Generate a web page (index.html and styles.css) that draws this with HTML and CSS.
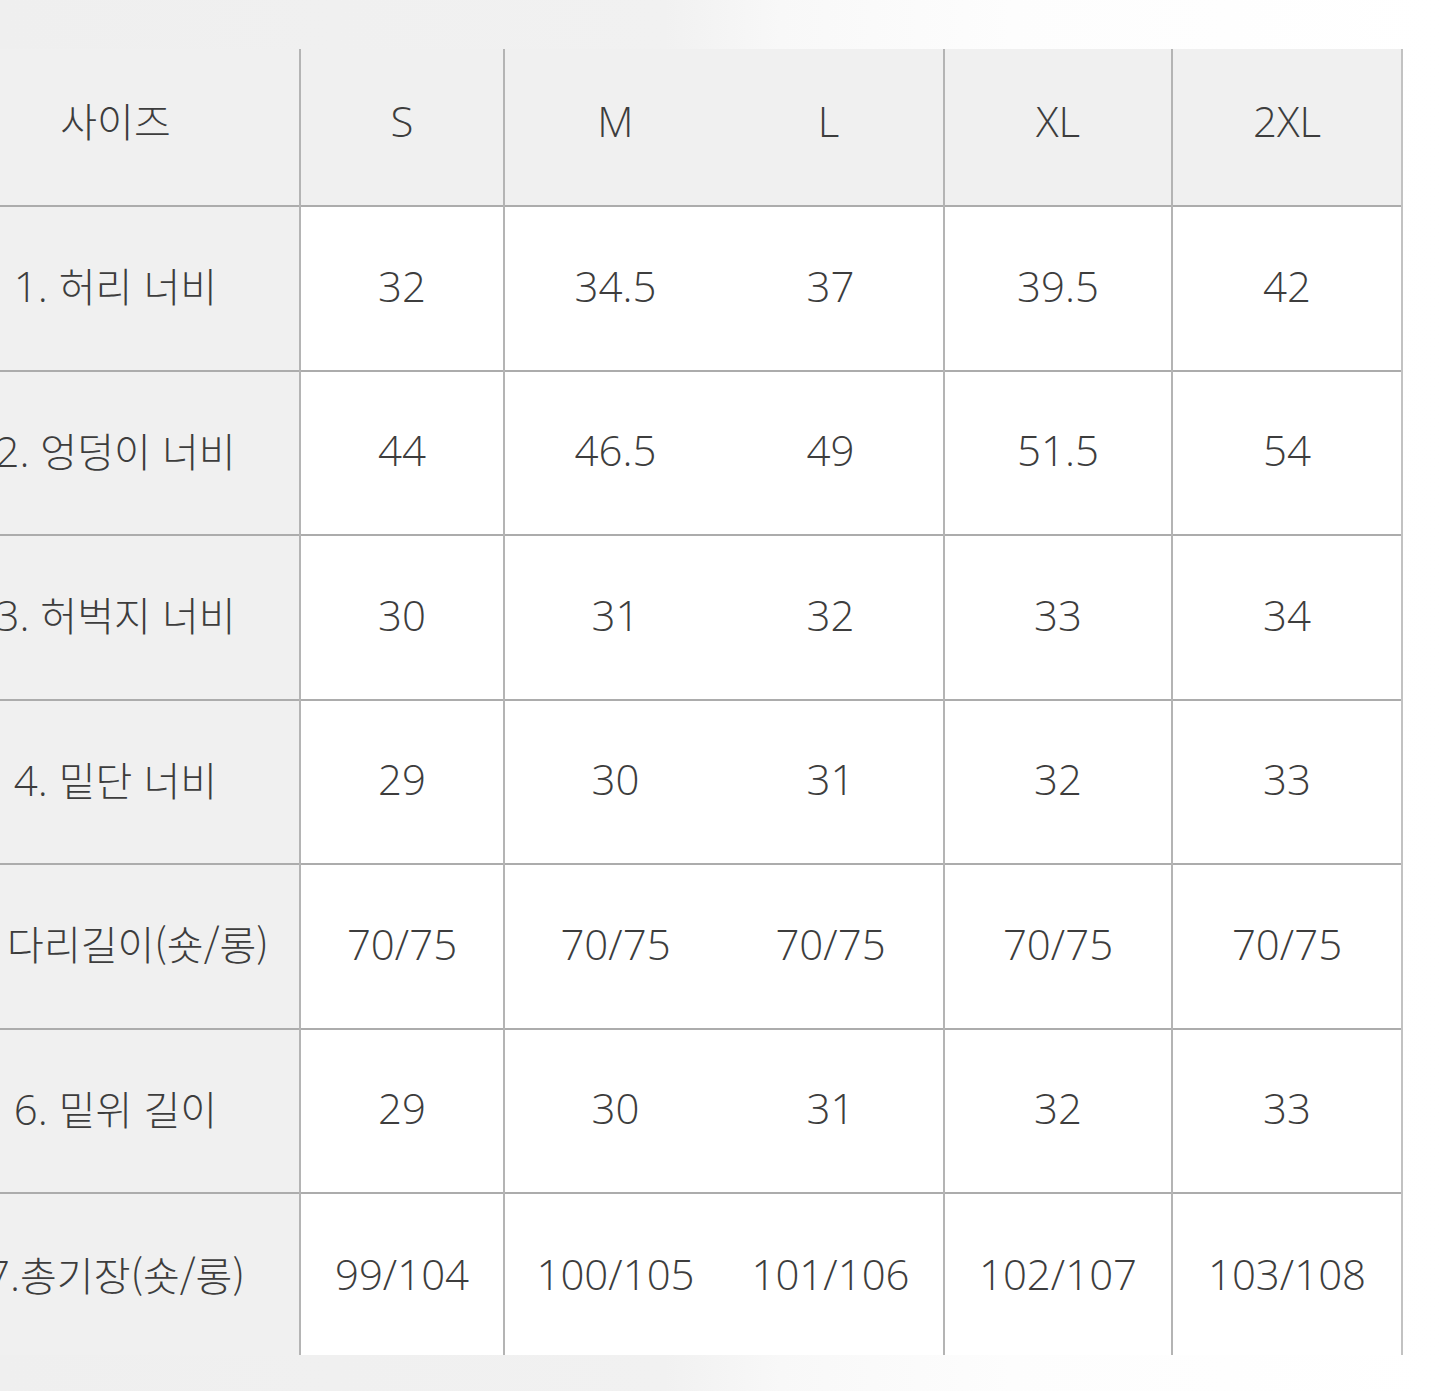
FILE: index.html
```html
<!DOCTYPE html>
<html lang="ko">
<head>
<meta charset="utf-8">
<title>사이즈</title>
<link rel="stylesheet" href="styles.css">
</head>
<body>
<div class="sheet">
  <table class="size-table">
    <colgroup>
      <col class="c-label">
      <col class="c-s">
      <col class="c-m">
      <col class="c-l">
      <col class="c-xl">
      <col class="c-2xl">
    </colgroup>
    <thead>
      <tr>
        <th class="label"><span class="ko">사이즈</span></th>
        <th>S</th>
        <th class="m">M</th>
        <th class="l">L</th>
        <th>XL</th>
        <th class="last">2XL</th>
      </tr>
    </thead>
    <tbody>
      <tr>
        <td class="label">1. <span class="ko">허리 너비</span></td>
        <td>32</td><td class="m">34.5</td><td class="l">37</td><td>39.5</td><td class="last">42</td>
      </tr>
      <tr>
        <td class="label">2. <span class="ko">엉덩이 너비</span></td>
        <td>44</td><td class="m">46.5</td><td class="l">49</td><td>51.5</td><td class="last">54</td>
      </tr>
      <tr>
        <td class="label">3. <span class="ko">허벅지 너비</span></td>
        <td>30</td><td class="m">31</td><td class="l">32</td><td>33</td><td class="last">34</td>
      </tr>
      <tr>
        <td class="label">4. <span class="ko">밑단 너비</span></td>
        <td>29</td><td class="m">30</td><td class="l">31</td><td>32</td><td class="last">33</td>
      </tr>
      <tr>
        <td class="label">5. <span class="ko">다리길이(숏/롱)</span></td>
        <td>70/75</td><td class="m">70/75</td><td class="l">70/75</td><td>70/75</td><td class="last">70/75</td>
      </tr>
      <tr>
        <td class="label">6. <span class="ko">밑위 길이</span></td>
        <td>29</td><td class="m">30</td><td class="l">31</td><td>32</td><td class="last">33</td>
      </tr>
      <tr class="final">
        <td class="label">7.<span class="ko">총기장(숏/롱)</span></td>
        <td>99/104</td><td class="m">100/105</td><td class="l">101/106</td><td>102/107</td><td class="last">103/108</td>
      </tr>
    </tbody>
  </table>
</div>
</body>
</html>
```

FILE: styles.css
```css
html, body {
  margin: 0;
  padding: 0;
}

body {
  width: 1445px;
  height: 1391px;
  overflow: hidden;
  background: linear-gradient(90deg, #efefef 0%, #f1f1f1 46%, #f8f8f8 54%, #fdfdfd 70%, #ffffff 100%);
  font-family: "Open Sans", "Noto Sans CJK KR", sans-serif;
  color: #3d3d3d;
}

.sheet {
  padding-top: 49px;
}

.size-table {
  margin-left: -68px;
  border-collapse: collapse;
  border-spacing: 0;
  table-layout: fixed;
  width: 1470px;
  font-size: 42px;
  font-weight: 300;
}

.c-label { width: 368px; }
.c-s { width: 204px; }
.c-m { width: 222px; }
.c-l { width: 218px; }
.c-xl { width: 228px; }
.c-2xl { width: 230px; }

.size-table th,
.size-table td {
  padding: 0;
  text-align: center;
  vertical-align: middle;
  font-weight: 300;
  border-left: 2px solid #b4b4b4;
  border-top: 2px solid #acacac;
  background: #ffffff;
  white-space: nowrap;
}

.size-table th {
  height: 157px;
  padding-bottom: 14px;
  box-sizing: border-box;
  border-top: none;
  background: #f0f0f0;
}

.size-table td {
  height: 164.5px;
  padding-bottom: 6px;
  box-sizing: border-box;
}

.size-table .final td {
  height: 162px;
  padding-bottom: 2px;
}

.size-table .label {
  border-left: none;
  background: #f0f0f0;
}

.size-table .l {
  border-left: none;
}

.size-table td.l {
  padding-right: 8px;
}

.size-table th.l {
  padding-right: 12px;
}

.size-table .last {
  border-right: 2px solid #c2c2c2;
}

.ko {
  font-family: "Noto Sans CJK KR", "Open Sans", sans-serif;
  font-size: 40px;
  font-weight: 300;
}
```
